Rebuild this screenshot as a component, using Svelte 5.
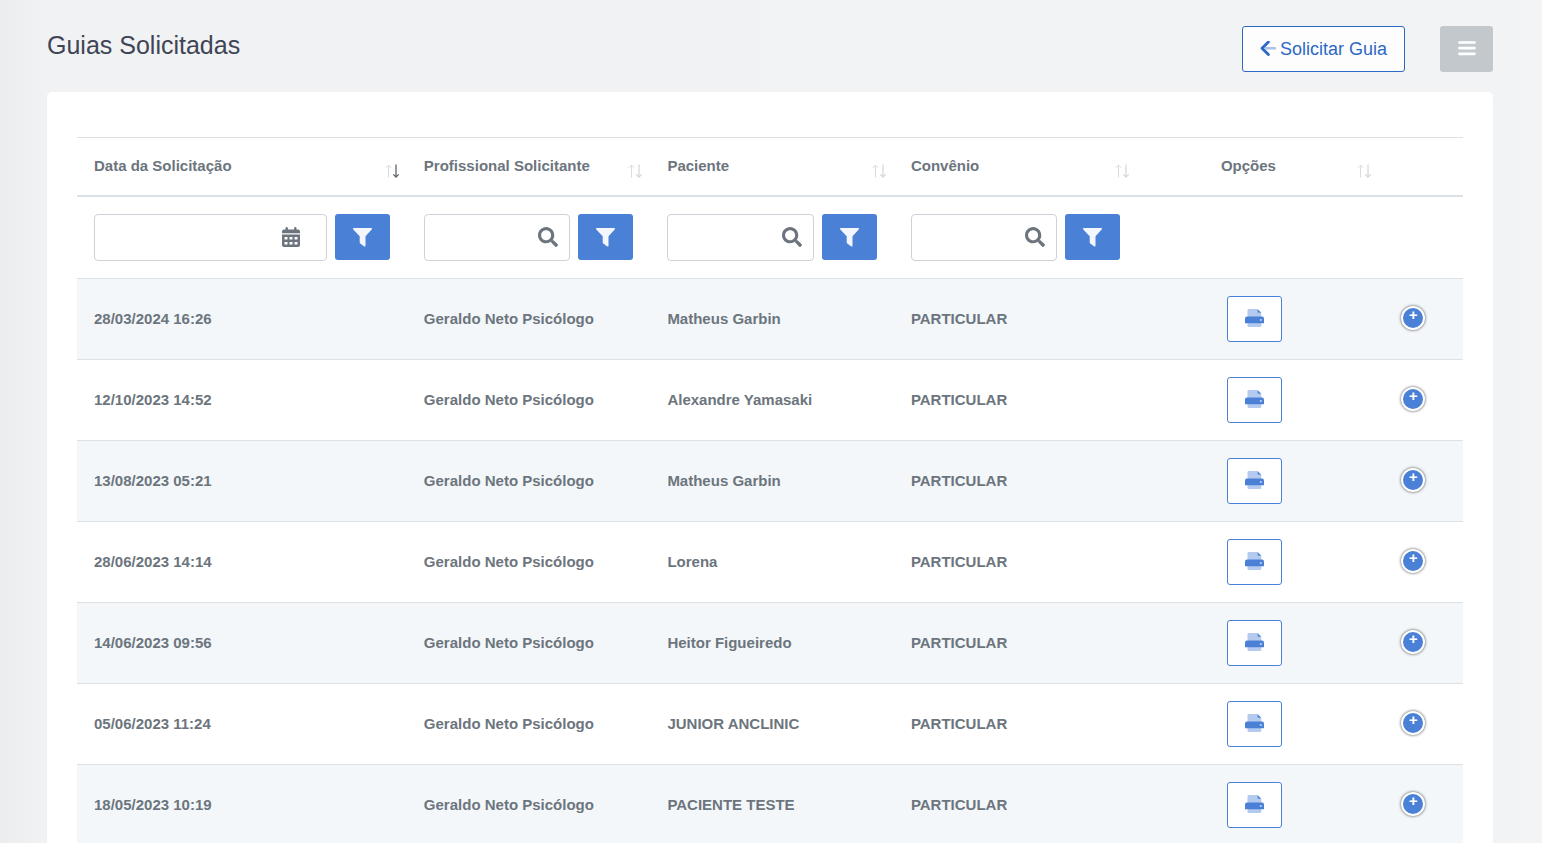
<script>
  const columns = [
    { label: 'Data da Solicitação', filter: 'date', sorted: true },
    { label: 'Profissional Solicitante', filter: 'search' },
    { label: 'Paciente', filter: 'search' },
    { label: 'Convênio', filter: 'search' },
    { label: 'Opções', center: true }
  ];

  const rows = [
    ['28/03/2024 16:26', 'Geraldo Neto Psicólogo', 'Matheus Garbin', 'PARTICULAR'],
    ['12/10/2023 14:52', 'Geraldo Neto Psicólogo', 'Alexandre Yamasaki', 'PARTICULAR'],
    ['13/08/2023 05:21', 'Geraldo Neto Psicólogo', 'Matheus Garbin', 'PARTICULAR'],
    ['28/06/2023 14:14', 'Geraldo Neto Psicólogo', 'Lorena', 'PARTICULAR'],
    ['14/06/2023 09:56', 'Geraldo Neto Psicólogo', 'Heitor Figueiredo', 'PARTICULAR'],
    ['05/06/2023 11:24', 'Geraldo Neto Psicólogo', 'JUNIOR ANCLINIC', 'PARTICULAR'],
    ['18/05/2023 10:19', 'Geraldo Neto Psicólogo', 'PACIENTE TESTE', 'PARTICULAR']
  ];
</script>

<main>
  <header>
    <h1>Guias Solicitadas</h1>
    <div class="actions">
      <button class="request" type="button">
        <svg width="16" height="16" viewBox="0 0 16 16" aria-hidden="true">
          <path d="M5 6h10a1 1 0 0 1 0 2.400H5z" fill="#a9c2ea" />
          <path d="M8.400 1 2 7.200l6.400 6.300" fill="none" stroke="currentColor" stroke-width="2.800" stroke-linecap="round" stroke-linejoin="round" />
        </svg>
        Solicitar Guia
      </button>
      <button class="menu" type="button" aria-label="Menu">
        <svg width="18" height="16" viewBox="0 0 18 16" aria-hidden="true">
          <path d="M1.500 1.500h15M1.500 7.200h15M1.500 12.800h15" stroke="#fff" stroke-width="2.700" stroke-linecap="round" />
        </svg>
      </button>
    </div>
  </header>

  <section class="card">
    <table>
      <colgroup>
        <col class="c-date" />
        <col class="c-text" />
        <col class="c-text" />
        <col class="c-text" />
        <col class="c-options" />
        <col />
      </colgroup>
      <thead>
        <tr class="titles">
          {#each columns as col}
            <th scope="col" aria-sort={col.sorted ? 'descending' : undefined}>
              <div class="title" class:center={col.center}>
                <span>{col.label}</span>
                <svg width="16" height="14" viewBox="0 0 16 14" fill="none" aria-hidden="true">
                  <path d="M4.500 13.500V1M1.800 3.800 4.500 1l2.700 2.800" stroke="#d9dcdf" />
                  <path d="M12 .5V13M9.300 10.400l2.700 2.700 2.700-2.700" stroke={col.sorted ? '#5f666d' : '#d3d6da'} stroke-width={col.sorted ? 1.3 : 1.2} />
                </svg>
              </div>
            </th>
          {/each}
          <td></td>
        </tr>
        <tr class="filters">
          {#each columns as col}
            <td>
              {#if col.filter}
                <div class="filter">
                  <div class="field">
                    <input type="text" aria-label={col.label} />
                    {#if col.filter === 'date'}
                      <svg class="calendar" width="18" height="20" viewBox="0 0 18 20" aria-hidden="true">
                        <path d="M3.500 2.500V1.200a1.200 1.200 0 0 1 2.400 0v1.300h6.200V1.200a1.200 1.200 0 0 1 2.400 0v1.300H16a2 2 0 0 1 2 2v1.700H0V4.500a2 2 0 0 1 2-2z" fill="currentColor" />
                        <path d="M0 7.500h18V18a2 2 0 0 1-2 2H2a2 2 0 0 1-2-2z" fill="currentColor" />
                        <path d="M2.500 10h3v2.600h-3zM7.500 10h3v2.600h-3zM12.500 10h3v2.600h-3zM2.500 15h3v2.600h-3zM7.500 15h3v2.600h-3zM12.500 15h3v2.600h-3z" fill="#fff" />
                      </svg>
                    {:else}
                      <svg class="search" width="20" height="20" viewBox="0 0 512 512" fill="currentColor" aria-hidden="true">
                        <path d="M505 442.700 405.300 343c-4.500-4.500-10.600-7-17-7H372c27.600-35.300 44-79.700 44-128C416 93.100 322.900 0 208 0S0 93.100 0 208s93.100 208 208 208c48.300 0 92.700-16.400 128-44v16.300c0 6.400 2.500 12.500 7 17l99.700 99.700c9.400 9.400 24.600 9.400 33.900 0l28.300-28.300c9.400-9.400 9.400-24.600.1-34zM208 336c-70.700 0-128-57.200-128-128 0-70.700 57.200-128 128-128 70.700 0 128 57.200 128 128 0 70.700-57.200 128-128 128z" />
                      </svg>
                    {/if}
                  </div>
                  <button class="apply" type="button" aria-label="Filtrar {col.label}">
                    <svg width="19" height="19" viewBox="0 0 19 19" fill="#f3f7fd" aria-hidden="true">
                      <path d="M.8 0h17.400q.8 0 .8.700 0 .5-.3.900L12.500 8.300v9.500q0 .7-.8.700-.4 0-.8-.3L7.300 15.600q-.6-.4-.6-1.100V8.300L.3 1.600Q0 1.200 0 .7 0 0 .8 0z" />
                    </svg>
                  </button>
                </div>
              {/if}
            </td>
          {/each}
          <td></td>
        </tr>
      </thead>
      <tbody>
        {#each rows as row}
          <tr>
            {#each row as value}
              <td>{value}</td>
            {/each}
            <td class="options">
              <button class="print" type="button" aria-label="Imprimir guia">
                <svg width="19" height="20" viewBox="0 0 19 20" aria-hidden="true">
                  <path d="M2.500 8V1.200Q2.500 0 3.700 0H12.500v3.800h3.800V8zM2.500 12h13.800v4.800q0 1.200-1.200 1.200H3.700q-1.200 0-1.200-1.200z" fill="#b4cbef" />
                  <path d="M12.500 0 16.300 3.800h-3.800z" fill="#4a80d5" />
                  <path d="M2 7.500h15Q19 7.500 19 9.500v4.200q0 .6-.6.600H.6q-.6 0-.6-.6V9.500Q0 7.500 2 7.500z" fill="#4a80d5" />
                  <circle cx="15.800" cy="11" r="1.100" fill="#c3d5f2" />
                </svg>
              </button>
            </td>
            <td class="more">
              <button class="expand" type="button" aria-label="Mostrar detalhes">+</button>
            </td>
          </tr>
        {/each}
      </tbody>
    </table>
  </section>
</main>

<style>
  :global(body) {
    background: linear-gradient(90deg, #ecedef 0, #f1f2f4 48px, #f2f3f5 calc(100% - 48px), #f3f4f6 100%);
    font-family: 'Liberation Sans', Arial, sans-serif;
  }

  main {
    padding: 26px 49px 0 47px;
    color: #6c757d;
  }

  button,
  input {
    box-sizing: border-box;
    margin: 0;
    font-family: inherit;
  }

  button {
    display: inline-flex;
    align-items: center;
    justify-content: center;
    padding: 0;
    border: 1px solid transparent;
    border-radius: 3px;
    cursor: pointer;
  }

  svg {
    display: block;
    flex: none;
  }

  header {
    display: flex;
    justify-content: space-between;
    margin-bottom: 20px;
  }

  h1 {
    margin: 0;
    color: #3f4554;
    font-size: 25px;
    font-weight: 400;
    line-height: 38px;
  }

  .actions {
    display: flex;
    gap: 35px;
  }

  .request {
    gap: 4px;
    height: 46px;
    padding: 0 17px;
    border-color: #2d68c4;
    background: #fdfdfe;
    color: #2d68c4;
    font-size: 18px;
  }

  .menu {
    width: 53px;
    height: 46px;
    background: #c2c8cc;
  }

  .card {
    padding: 45px 30px 30px;
    border-radius: 5px;
    background: #fff;
  }

  table {
    width: 100%;
    border-collapse: separate;
    border-spacing: 0;
    table-layout: fixed;
    font-size: 15px;
    font-weight: 700;
  }

  .c-date {
    width: 23.8%;
  }

  .c-text {
    width: 17.57%;
  }

  .c-options {
    width: 17.46%;
  }

  th,
  td {
    padding: 17px;
    border-top: 1px solid #dce1e6;
    text-align: left;
    vertical-align: top;
  }

  .titles > * {
    padding-right: 7px;
    border-bottom: 2px solid #dce1e6;
    line-height: 21px;
  }

  .title {
    display: flex;
    align-items: flex-end;
    justify-content: space-between;
    gap: 14px;
    min-height: 23px;
    white-space: nowrap;
  }

  .title span {
    align-self: flex-start;
  }

  .center span {
    flex: 1;
    text-align: center;
  }

  .filters td {
    border-top: 0;
  }

  .filter {
    display: flex;
    align-items: flex-start;
    gap: 8px;
  }

  .field {
    position: relative;
    flex: 1;
    min-width: 0;
  }

  input {
    display: block;
    width: 100%;
    height: 47px;
    padding: 0 44px 0 12px;
    border: 1px solid #ced3da;
    border-radius: 4px;
    background: #fff;
    color: #6c757d;
    font-size: 15px;
  }

  .field svg {
    position: absolute;
    top: 13px;
    pointer-events: none;
  }

  .calendar {
    right: 27px;
  }

  .search {
    right: 12px;
  }

  .apply {
    flex: none;
    width: 55px;
    height: 46px;
    background: #4a80d5;
  }

  tbody td {
    line-height: 46px;
    white-space: nowrap;
  }

  tbody tr:nth-child(odd) td {
    background: #f3f7fa;
  }

  tbody .options,
  tbody .more {
    padding-right: 24px;
    line-height: 0;
    text-align: center;
  }

  tbody .more {
    padding-right: 33px;
    padding-bottom: 19px;
    vertical-align: middle;
  }

  .print {
    width: 55px;
    height: 46px;
    border-color: #4a80d5;
    background: #fff;
  }

  .expand {
    width: 24px;
    height: 24px;
    padding-bottom: 2px;
    border: 2px solid #fff;
    border-radius: 50%;
    background: #4a80d5;
    box-shadow: 0 0 3px #444;
    color: #fff;
    font-family: 'Liberation Mono', 'Courier New', monospace;
    font-size: 15px;
    font-weight: 700;
    line-height: 18px;
  }
</style>
